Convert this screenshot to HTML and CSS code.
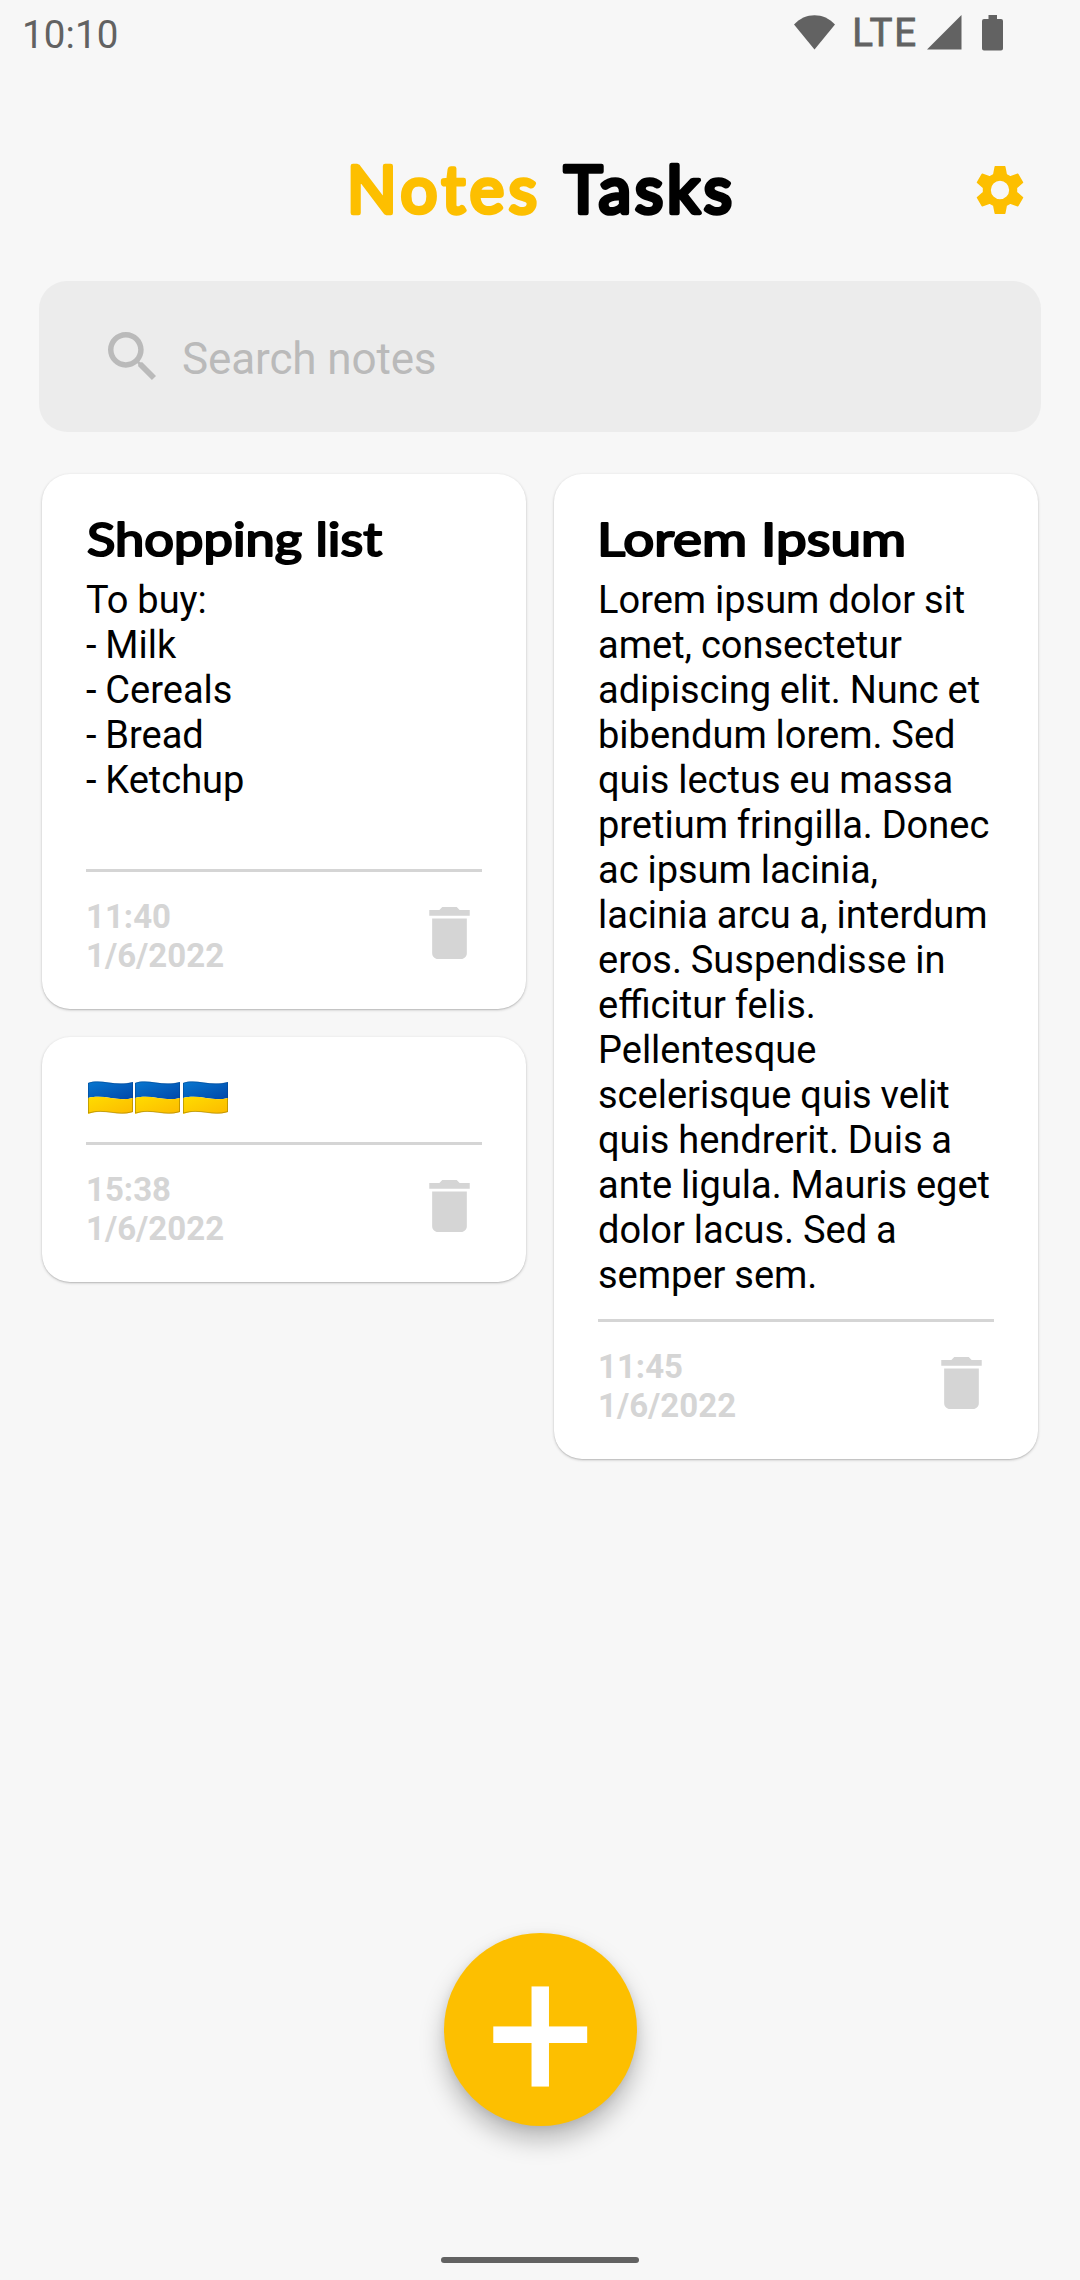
FILE: index.html
```html
<!DOCTYPE html>
<html lang="en">
<head>
<meta charset="utf-8">
<title>Notes</title>
<link rel="stylesheet" href="styles.css">
</head>
<body>
<svg width="0" height="0" class="defs">
  <defs>
    <symbol id="trash" viewBox="5 3 14 18"><path d="M6 19c0 1.100.9 2 2 2h8c1.100 0 2-.9 2-2V7H6v12zM19 4h-3.500l-1-1h-5l-1 1H5v2h14V4z"/></symbol>
    <linearGradient id="sky" x1="0" y1="0" x2="1" y2="1"><stop offset="0" stop-color="#0878d0"/><stop offset="1" stop-color="#0047aa"/></linearGradient>
    <linearGradient id="wheat" x1="0" y1="0" x2="1" y2="1"><stop offset="0" stop-color="#ffdc00"/><stop offset="1" stop-color="#fcba00"/></linearGradient>
    <symbol id="flag" viewBox="0 0 45 33">
      <path fill="url(#sky)" d="M0 2C13-3 27 6 45 1V17C29 21 17 13 0 17Z"/>
      <path fill="url(#wheat)" d="M0 17C17 13 29 21 45 17V31C29 36 17 27 0 33Z"/>
      <path fill="none" stroke="#8a6d00" stroke-opacity=".5" d="M.5 17V32C17 27 29 35.500 44.500 30.700V17"/>
      <path fill="none" stroke="#003a80" stroke-opacity=".4" d="M.5 17V2C13-2 27 6 44.500 1.500V17"/>
    </symbol>
  </defs>
</svg>
<div class="screen">
  <header class="status">
    <span class="clock">10:10</span>
    <div class="indicators">
      <svg class="wifi" width="41" height="35" viewBox="0 0 41 35"><path d="M20.500 34.500 0 9.500C11-3 30-3 41 9.500Z"/></svg>
      <span class="network">LTE</span>
      <svg class="signal" width="35" height="35" viewBox="0 0 35 35"><path d="M0 34.500H34.500V0Z"/></svg>
      <svg class="battery" width="21" height="36" viewBox="0 0 21 36"><path d="M6.500 0H15V4H19Q21 4 21 6V33.500Q21 35.500 19 35.500H2Q0 35.500 0 33.500V6Q0 4 2 4H6.500Z"/></svg>
    </div>
  </header>

  <nav class="tabs">
    <svg class="tab-labels" width="400" height="80" viewBox="0 0 400 80">
      <text class="tab tab-active" x="6" y="57" textLength="190">Notes</text>
      <text class="tab" x="223" y="57" textLength="168">Tasks</text>
    </svg>
    <svg class="gear" width="48" height="48" viewBox="-72 -72 144 144"><path fill-rule="evenodd" d="M-14-69.500H14L18.500-46 30.600-39 53.200-46.900 67.200-22.600 49.100-7V7L67.200 22.600 53.200 46.900 30.600 39 18.500 46 14 69.500H-14L-18.500 46-30.600 39-53.200 46.900-67.200 22.600-49.100 7V-7L-67.200-22.600-53.200-46.900-30.600-39-18.500-46ZM30 0A30 30 0 1 0-30 0A30 30 0 1 0 30 0Z"/></svg>
  </nav>

  <div class="search">
    <svg width="48" height="48" viewBox="3 3 17.490 17.490"><path d="M15.500 14h-.79l-.28-.27C15.410 12.590 16 11.110 16 9.500 16 5.910 13.090 3 9.500 3S3 5.910 3 9.500 5.910 16 9.500 16c1.610 0 3.090-.59 4.230-1.570l.27.28v.79l5 4.990L20.490 19l-4.990-5zm-6 0C7.010 14 5 11.990 5 9.500S7.010 5 9.500 5 14 7.010 14 9.500 11.990 14 9.500 14z"/></svg>
    <span>Search notes</span>
  </div>

  <main class="board">
    <div class="column">
      <article class="card">
        <svg class="title" width="396" height="62"><text x="1" y="48.500" textLength="295" lengthAdjust="spacingAndGlyphs">Shopping list</text></svg>
        <p class="body">To buy:<br>- Milk<br>- Cereals<br>- Bread<br>- Ketchup<br><br></p>
        <footer class="meta"><time>11:40<br>1/6/2022</time><svg class="trash"><use href="#trash"/></svg></footer>
      </article>
      <article class="card">
        <div class="flags"><svg><use href="#flag"/></svg><svg><use href="#flag"/></svg><svg><use href="#flag"/></svg></div>
        <footer class="meta"><time>15:38<br>1/6/2022</time><svg class="trash"><use href="#trash"/></svg></footer>
      </article>
    </div>
    <div class="column">
      <article class="card">
        <svg class="title" width="396" height="62"><text x="-1" y="48.500" textLength="309" lengthAdjust="spacingAndGlyphs">Lorem Ipsum</text></svg>
        <p class="body">Lorem ipsum dolor sit<br>amet, consectetur<br>adipiscing elit. Nunc et<br>bibendum lorem. Sed<br>quis lectus eu massa<br>pretium fringilla. Donec<br>ac ipsum lacinia,<br>lacinia arcu a, interdum<br>eros. Suspendisse in<br>efficitur felis.<br>Pellentesque<br>scelerisque quis velit<br>quis hendrerit. Duis a<br>ante ligula. Mauris eget<br>dolor lacus. Sed a<br>semper sem.</p>
        <footer class="meta"><time>11:45<br>1/6/2022</time><svg class="trash"><use href="#trash"/></svg></footer>
      </article>
    </div>
  </main>

  <button class="fab">+</button>
  <div class="home-bar"></div>
</div>
</body>
</html>
```
FILE: styles.css
```css
* { box-sizing: border-box; }
body { margin: 0; background: #f7f7f7; font-family: Roboto, sans-serif; color: #000; }
.defs { display: block; height: 0; }
.screen { width: 1080px; height: 2280px; display: flex; flex-direction: column; align-items: center; overflow: hidden; }
.status { width: 100%; height: 66px; padding: 0 77px 0 22px; display: flex; justify-content: space-between; align-items: flex-start; color: #626262; fill: #626262; font-size: 38.500px; line-height: 45px; }
.clock { padding-top: 12px; letter-spacing: .15px; }
.indicators { display: flex; align-items: flex-start; }
.indicators svg { margin-top: 15px; }
.network { letter-spacing: 1.800px; -webkit-text-stroke: .8px #626262; margin: 10px 9px 0 16.500px; width: 67px; text-align: right; }
.battery { margin-left: 20px; }
.tabs { width: 100%; height: 215px; padding: 90px 56px 0 341px; display: flex; justify-content: space-between; align-items: flex-start; }
.tab-labels { display: block; overflow: visible; }
.tab { font: 400 65px Lato, sans-serif; stroke: #000; stroke-width: 4.600px; stroke-linejoin: round; }
.tab-active { fill: #fdbf00; stroke: #fdbf00; }
.gear { margin-top: 10px; fill: #fdbf00; stroke: #fdbf00; stroke-width: 5; stroke-linejoin: round; }
.search { width: 1002px; height: 151px; border-radius: 28px; background: #ececec; color: #bababa; fill: #bababa; display: flex; align-items: flex-start; padding: 51px 69px 0; gap: 26px; font-size: 44px; line-height: 52px; }
.search span { padding-top: 1px; letter-spacing: -.12px; }
.board { width: 996px; margin-top: 42px; display: grid; grid-template-columns: 484px 484px; gap: 28px; align-items: start; }
.column { display: flex; flex-direction: column; gap: 28px; }
.card { background: #fff; border-radius: 28px; padding: 33px 44px; box-shadow: 0 1px 3px rgba(0,0,0,.22), 0 1px 1px rgba(0,0,0,.08); }
.title { display: block; overflow: visible; font: 400 45.500px Lato, sans-serif; stroke: #000; stroke-width: 2.100px; stroke-linejoin: round; }
.body { margin: 9px 0 21px; font-size: 38px; line-height: 45px; word-spacing: -.6px; white-space: nowrap; }
.flags { height: 72px; padding: 11px 0 0 1.500px; display: flex; gap: 2.500px; }
.flags svg { width: 45px; height: 33px; }
.meta { border-top: 3px solid #d5d5d5; padding: 25px 12px 1px 0; display: flex; justify-content: space-between; align-items: flex-start; color: #d5d5d5; fill: #d5d5d5; font-size: 33px; font-weight: 700; line-height: 39px; }
.trash { width: 41px; height: 52px; margin-top: 9.500px; }
.fab { margin: 474px 0 0 1px; width: 193px; height: 193px; flex: none; border: 0; padding: 0; border-radius: 50%; background: #fdbf00; color: #fff; font: 400 192.500px/203px Roboto, sans-serif; box-shadow: 0 14px 24px rgba(0,0,0,.25), 0 2px 8px rgba(0,0,0,.08); }
.home-bar { width: 198px; height: 6px; margin-top: auto; margin-bottom: 17px; border-radius: 3px; background: #626262; }
```
